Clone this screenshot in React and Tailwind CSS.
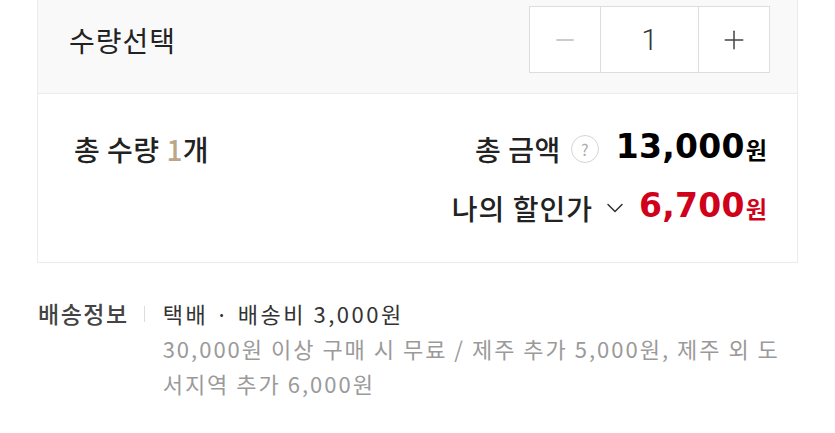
import { Minus, Plus, ChevronDown } from 'lucide-react';

const font = { fontFamily: '"Noto Sans CJK KR", "Noto Sans", sans-serif' };
const digits = { fontFamily: '"DejaVu Sans", "Noto Sans CJK KR", sans-serif' };
const roboto = { fontFamily: 'Roboto, "Noto Sans", sans-serif' };

export default function App() {
  return (
    <div className="min-h-screen bg-white text-[#222]" style={font}>
      <div className="mx-[37px] border-x border-b border-[#ebebeb]">
        {/* 수량선택 */}
        <div className="h-[94px] bg-[#f9f9f9] border-b border-[#ebebeb] flex items-start justify-between pl-[31px] pr-[27px] pt-[6px]">
          <span className="mt-[15px] text-[28px] leading-[38px] tracking-[1px] text-[#222]">수량선택</span>
          <div className="flex h-[67px] border border-[#dddddd] bg-white">
            <button className="w-[70px] flex items-center justify-center text-[#bbbbbb]">
              <Minus size={28} strokeWidth={1.2} />
            </button>
            <div className="w-[99px] border-x border-[#dddddd] flex items-center justify-center text-[30px] font-light text-[#333]" style={roboto}>
              1
            </div>
            <button className="w-[70px] flex items-center justify-center text-[#444]">
              <Plus size={30} strokeWidth={1.2} />
            </button>
          </div>
        </div>

        {/* 합계 */}
        <div className="h-[168px] flex justify-between pl-[36px] pr-[30px] pt-[36px]">
          <div className="text-[28px] leading-[38px] font-medium tracking-[0.5px] text-[#222]">
            총 수량 <span className="text-[#bba68a]">1</span>개
          </div>
          <div className="flex flex-col items-end gap-[21px]">
            <div className="flex items-center h-[38px]">
              <span className="text-[28px] font-medium tracking-[0.5px] text-[#222]">총 금액</span>
              <span className="ml-[10px] w-[28px] h-[28px] rounded-full border border-[#d5d5d5] flex items-center justify-center text-[16px] text-[#aaa]">?</span>
              <span className="ml-[17px] -mt-[4px] text-[33px] font-bold tracking-[0.3px] text-black" style={digits}>13,000</span>
              <span className="ml-[1px] text-[23px] font-bold text-black">원</span>
            </div>
            <div className="flex items-center h-[38px]">
              <span className="text-[28px] font-medium tracking-[1px] text-[#222]">나의 할인가</span>
              <ChevronDown className="ml-[8px] text-[#333]" size={28} strokeWidth={1.3} />
              <span className="ml-[10px] -mt-[4px] text-[33px] font-bold tracking-[0.3px] text-[#d0021b]" style={digits}>6,700</span>
              <span className="ml-[1px] text-[23px] font-bold text-[#d0021b]">원</span>
            </div>
          </div>
        </div>
      </div>

      {/* 배송정보 */}
      <div className="flex pl-[38px] pr-[38px] pt-[33px]">
        <span className="text-[23px] leading-[35px] tracking-[1.5px] text-[#444] font-medium">배송정보</span>
        <span className="ml-[15px] mr-[18px] mt-[10px] w-px h-[16px] bg-[#dddddd]"></span>
        <div className="flex-1 text-[22px] leading-[35px] tracking-[2px]">
          <div className="text-[#333] tracking-[2.5px]">택배 · 배송비 3,000원</div>
          <div className="text-[#9a9a9a]">
            30,000원 이상 구매 시 무료 / 제주 추가 5,000원, 제주 외 도<br />서지역 추가 6,000원
          </div>
        </div>
      </div>
    </div>
  );
}
